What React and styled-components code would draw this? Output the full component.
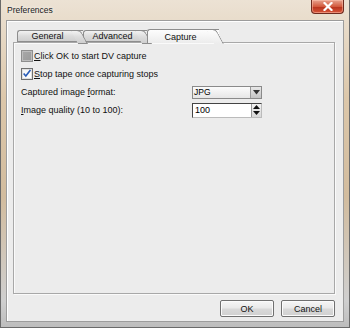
import styled, { createGlobalStyle } from "styled-components";

const GlobalStyle = createGlobalStyle`
  html, body {
    margin: 0;
    padding: 0;
    overflow: hidden;
    background: #d8c7ad;
  }
  * {
    box-sizing: border-box;
  }
`;

function App() {
  return (
    <>
      <GlobalStyle />
      <Window>
        <TitleBar>
          <Title>Preferences</Title>
          <CloseButton>
            <svg width="10" height="9" viewBox="0 0 10 9">
              <path
                d="M1.5 1 L8.5 8 M8.5 1 L1.5 8"
                stroke="#fff"
                strokeWidth="2.2"
                strokeLinecap="square"
              />
            </svg>
          </CloseButton>
        </TitleBar>
        <Client>
          <TabStrip>
            <Tab $width={66} $z={3}>General</Tab>
            <Tab $width={64} $z={2}>Advanced</Tab>
            <Tab $width={72} $z={4} $active>
              Capture
            </Tab>
          </TabStrip>
          <Panel>
            <CheckRow>
              <CheckBox $disabled />
              <span>
                <u>C</u>lick OK to start DV capture
              </span>
            </CheckRow>
            <CheckRow>
              <CheckBox $checked>
                <svg width="11" height="11" viewBox="0 0 11 11">
                  <path
                    d="M1.8 5.5 L4.2 8.3 L9.3 1.6"
                    fill="none"
                    stroke="#2a5db8"
                    strokeWidth="1.8"
                  />
                </svg>
              </CheckBox>
              <span>
                <u>S</u>top tape once capturing stops
              </span>
            </CheckRow>
            <Form>
              <Label>
                Captured image <u>f</u>ormat:
              </Label>
              <Select>
                <SelectValue>JPG</SelectValue>
                <DropButton>
                  <svg width="7" height="5" viewBox="0 0 7 5">
                    <path d="M0 0 H7 L3.5 4.5 Z" fill="#333" />
                  </svg>
                </DropButton>
              </Select>
              <Label>
                <u>I</u>mage quality (10 to 100):
              </Label>
              <Spin>
                <SpinValue>100</SpinValue>
                <SpinButtons>
                  <SpinArrow>
                    <svg width="7" height="4" viewBox="0 0 7 4">
                      <path d="M0 4 H7 L3.5 0 Z" fill="#111" />
                    </svg>
                  </SpinArrow>
                  <SpinArrow>
                    <svg width="7" height="4" viewBox="0 0 7 4">
                      <path d="M0 0 H7 L3.5 4 Z" fill="#111" />
                    </svg>
                  </SpinArrow>
                </SpinButtons>
              </Spin>
            </Form>
          </Panel>
          <ButtonRow>
            <Button>OK</Button>
            <Button>Cancel</Button>
          </ButtonRow>
        </Client>
      </Window>
    </>
  );
}

export default App;

const Window = styled.div`
  width: 350px;
  height: 328px;
  display: flex;
  flex-direction: column;
  padding: 0 5px 5px 5px;
  border: 1px solid #6a6a6a;
  border-top: none;
  background: linear-gradient(
    to bottom,
    #ece2d4 0%,
    #dcc7aa 30%,
    #d2bc9e 60%,
    #cfcfcf 92%,
    #bdbdbd 100%
  );
  font-family: "Liberation Sans", Arial, sans-serif;
  font-size: 9px;
  color: #000;
`;

const TitleBar = styled.div`
  height: 20px;
  display: flex;
  align-items: flex-start;
  justify-content: space-between;
`;

const Title = styled.div`
  padding: 5px 0 0 1px;
  font-size: 8.5px;
  color: #1a1a1a;
  text-shadow: 0 0 4px #fff;
`;

const CloseButton = styled.div`
  width: 33px;
  height: 14px;
  display: flex;
  align-items: center;
  justify-content: center;
  border: 1px solid #6e2a1e;
  border-top: none;
  border-radius: 0 0 4px 4px;
  background: linear-gradient(to bottom, #e7a38f 0%, #d35a3e 50%, #b8351e 55%, #d8553a 100%);
  box-shadow: inset 0 0 0 1px rgba(255, 200, 180, 0.5);
`;

const Client = styled.div`
  flex: 1;
  display: flex;
  flex-direction: column;
  padding: 8px 8px 4px 6px;
  background: #ececec;
  border: 1px solid #9c9c9c;
  box-shadow: inset 1px 1px 0 #fff;
`;

const TabStrip = styled.div`
  display: flex;
  align-items: flex-end;
  height: 13px;
  padding-left: 4px;
  position: relative;
  z-index: 2;
`;

const Tab = styled.div`
  position: relative;
  z-index: ${(p) => p.$z};
  width: ${(p) => p.$width}px;
  height: ${(p) => (p.$active ? 14 : 12)}px;
  margin-bottom: ${(p) => (p.$active ? -1 : 0)}px;
  padding-right: 6px;
  display: flex;
  align-items: center;
  justify-content: center;
  border: 1px solid #8d8d8d;
  border-right: none;
  border-bottom: ${(p) => (p.$active ? "none" : "1px solid #8d8d8d")};
  border-radius: 3px 0 0 0;
  background: ${(p) =>
    p.$active
      ? "linear-gradient(to bottom, #fdfdfd, #ececec)"
      : "linear-gradient(to bottom, #f2f2f2 0%, #dcdcdc 50%, #cfcfcf 100%)"};
  color: #111;

  &::after {
    content: "";
    position: absolute;
    top: -1px;
    right: -5px;
    width: 9px;
    height: calc(100% + ${(p) => (p.$active ? 1 : 2)}px);
    border-top: 1px solid #8d8d8d;
    border-right: 1px solid #8d8d8d;
    border-bottom: ${(p) => (p.$active ? "none" : "1px solid #8d8d8d")};
    border-radius: 0 4px 0 0;
    background: inherit;
    transform: skewX(28deg);
    transform-origin: bottom left;
    z-index: -1;
  }
`;

const Panel = styled.div`
  flex: 1;
  display: flex;
  flex-direction: column;
  gap: 5px;
  padding: 6px 0 0 7px;
  border: 1px solid #a8a8a8;
  box-shadow: inset 1px 1px 0 #fafafa, 1px 1px 0 #fafafa;
  background: #ececec;
`;

const CheckRow = styled.div`
  height: 13px;
  display: flex;
  align-items: center;
  gap: 1px;
  color: #111;
`;

const CheckBox = styled.div`
  width: 12px;
  height: 12px;
  display: flex;
  align-items: center;
  justify-content: center;
  border: 1px solid ${(p) => (p.$disabled ? "#8e8e8e" : "#6f6f6f")};
  background: ${(p) =>
    p.$disabled
      ? "linear-gradient(135deg, #a8a8a8, #9a9a9a)"
      : "linear-gradient(135deg, #f4f4f4, #ffffff)"};
  box-shadow: inset 0 0 0 1px ${(p) => (p.$disabled ? "#bdbdbd" : "#e0e0e0")};
`;

const Form = styled.div`
  display: grid;
  grid-template-columns: 171px 70px;
  grid-auto-rows: 14px;
  row-gap: 4px;
  align-items: center;
`;

const Label = styled.div`
  color: #111;
`;

const Select = styled.div`
  height: 13px;
  display: flex;
  border: 1px solid #8a8a8a;
  background: linear-gradient(to bottom, #fbfbfb, #e6e6e6);
`;

const SelectValue = styled.div`
  flex: 1;
  display: flex;
  align-items: center;
  padding-left: 1px;
  font-size: 8.5px;
`;

const DropButton = styled.div`
  width: 11px;
  display: flex;
  align-items: center;
  justify-content: center;
  border-left: 1px solid #9a9a9a;
  background: linear-gradient(to bottom, #e8e8e8, #c4c4c4);
`;

const Spin = styled.div`
  height: 15px;
  display: flex;
  border: 1px solid #444;
  border-right-color: #bbb;
  border-bottom-color: #bbb;
  background: #fff;
`;

const SpinValue = styled.div`
  flex: 1;
  display: flex;
  align-items: center;
  padding-left: 2px;
  font-size: 9px;
`;

const SpinButtons = styled.div`
  width: 10px;
  display: flex;
  flex-direction: column;
  border-left: 1px solid #999;
  background: linear-gradient(to bottom, #f2f2f2, #d8d8d8);
`;

const SpinArrow = styled.div`
  flex: 1;
  display: flex;
  align-items: center;
  justify-content: center;
`;

const ButtonRow = styled.div`
  display: flex;
  justify-content: flex-end;
  gap: 7px;
  padding-top: 6px;
`;

const Button = styled.div`
  width: 54px;
  height: 17px;
  display: flex;
  align-items: center;
  justify-content: center;
  border: 1px solid #707070;
  border-radius: 2px;
  background: linear-gradient(to bottom, #f6f6f6 0%, #e9e9e9 48%, #d9d9d9 52%, #d0d0d0 100%);
  box-shadow: inset 0 0 0 1px #fbfbfb;
  color: #111;
`;
